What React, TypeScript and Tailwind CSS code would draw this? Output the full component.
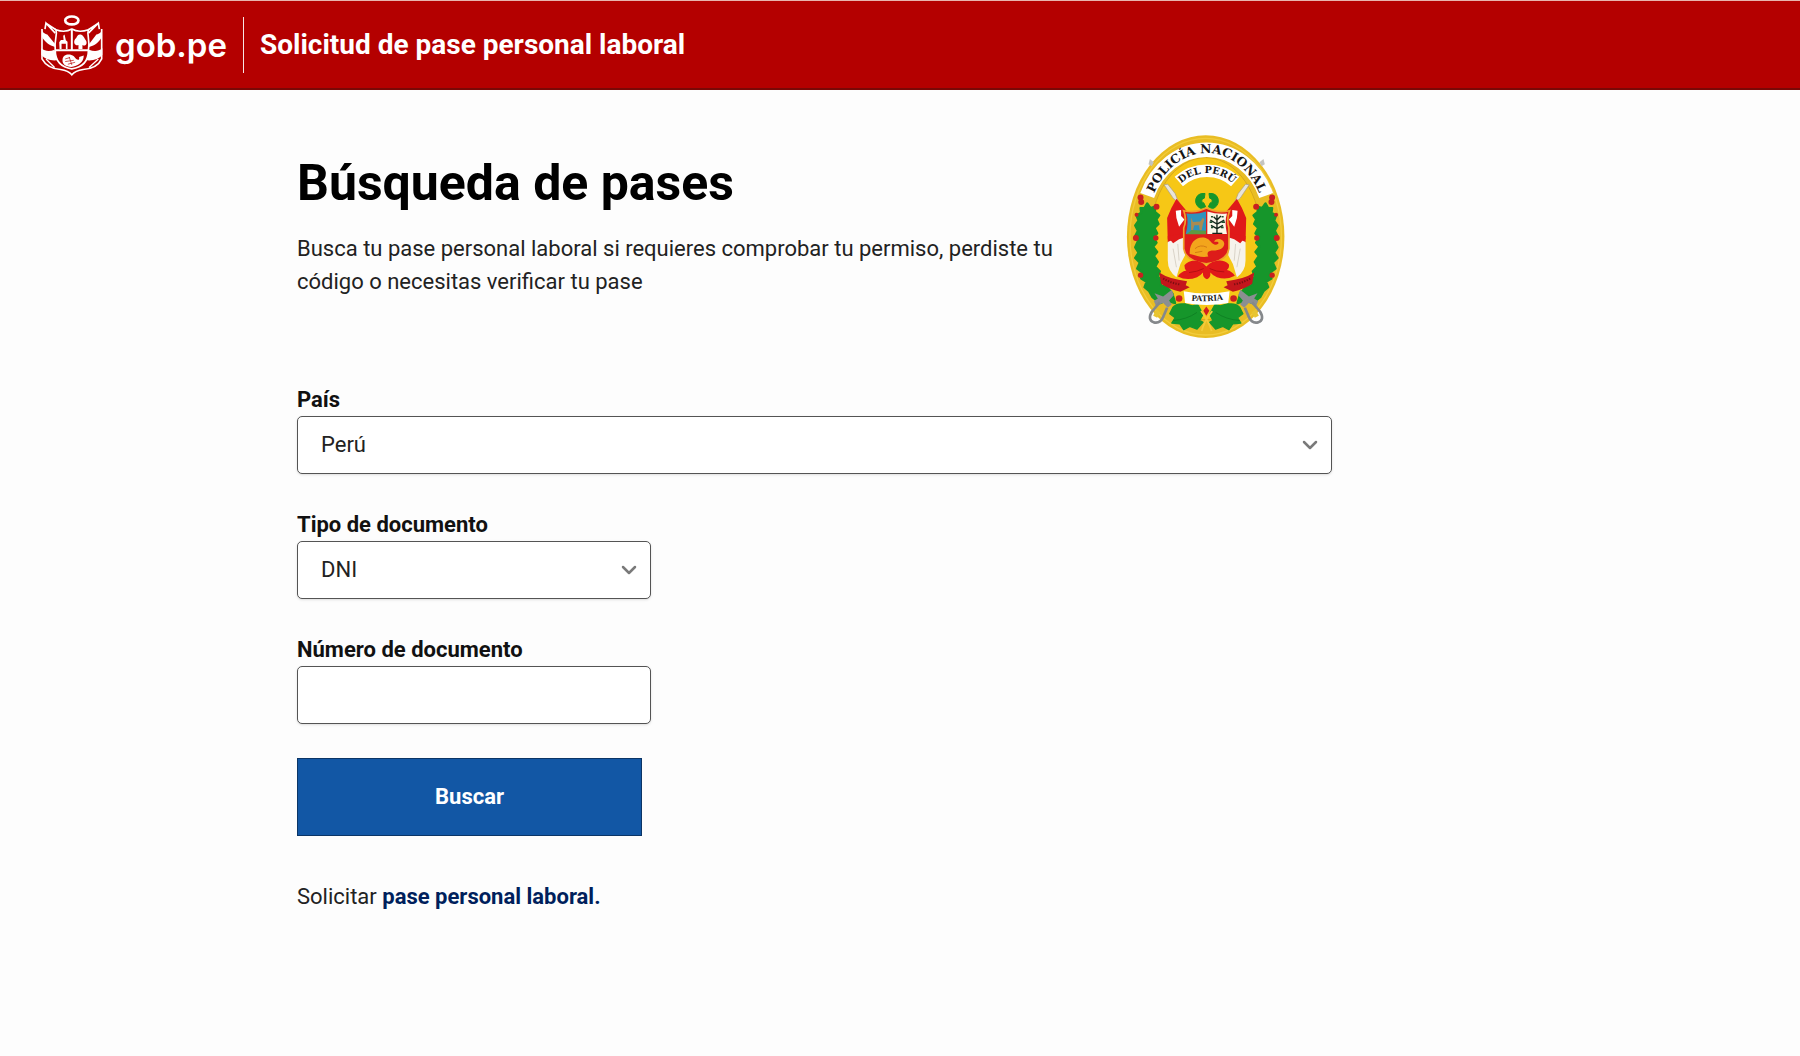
import React from 'react';
import { ChevronDown } from 'lucide-react';

const GobCrest = () => (
  <svg viewBox="60 38 190 192" className="h-[64px] w-[63px]" fill="none" stroke="#fff" aria-hidden="true">
    <ellipse cx="156" cy="60" rx="20" ry="12" strokeWidth="8" />
    {/* Flags */}
    <path d="M106 98 L78 68 L75 86 M206 98 L236 68 L239 86 M78 68 L108 88 M236 68 L206 88" strokeWidth="5" />
    <path d="M66 84 C66 96 74 100 82 102 L108 134 L106 140 C88 136 74 124 66 110 Z" fill="#fff" stroke="none" />
    <path d="M246 84 C246 96 240 100 230 102 L206 134 L208 140 C226 136 240 124 246 110 Z" fill="#fff" stroke="none" />
    <path d="M64 144 C76 154 90 154 104 148 L112 180 C90 182 74 176 64 164 Z" fill="#fff" stroke="none" />
    <path d="M248 144 C236 154 222 154 208 148 L200 180 C222 182 238 176 248 164 Z" fill="#fff" stroke="none" />
    <path d="M66 86 V176 C78 198 96 206 122 208 C138 210 148 214 156 224 C164 214 174 210 190 208 C216 206 236 198 246 176 V86" strokeWidth="5" />
    <path d="M78 176 L104 202 M236 176 L208 202" strokeWidth="4" />
    {/* Shield */}
    <path d="M108 88 C124 94 142 94 156 86 C170 94 188 94 206 88 C200 104 212 116 206 150 C206 186 184 202 156 206 C128 202 106 186 106 150 C102 116 114 104 108 88 Z" fill="#b40000" strokeWidth="5" />
    <path d="M106 150 H206 M156 88 V150" strokeWidth="6" />
    <path d="M134 102 L138 120 L143 124 V146 H138 V130 H125 V146 H119 L118 126 L123 119 H131 L130 106 Z" fill="#fff" stroke="none" />
    <path d="M180 102 C170 104 172 112 166 116 C158 128 168 138 176 134 V146 H188 V134 C198 140 205 128 197 118 C192 110 190 102 180 102 Z" fill="#fff" stroke="none" />
    <path d="M128 178 C128 162 150 158 162 168 C172 182 180 182 178 170 L192 166 C192 188 174 198 154 200 C138 200 126 192 128 178 Z" fill="#fff" stroke="none" />
    <path d="M136 176 L150 172 M136 184 L162 180 M144 192 L166 186 M148 170 L156 194" stroke="#b40000" strokeWidth="2" />
  </svg>
);

const Laurel = () => (
  <g>
    <path
      d="M112 248 L122 262 L134 258 L136 274 L148 284 L140 296 L146 310 L134 322 L142 338 L130 350 L140 366 L130 378 L142 394 L132 406 L144 424 L136 438 L150 452 L144 468 L158 480 L152 494 L172 500 L188 520 L196 548 L170 540 L150 548 L128 530 L118 512 L104 500 L110 484 L94 474 L98 456 L82 444 L90 426 L76 412 L86 396 L76 380 L84 362 L76 346 L84 330 L76 314 L86 300 L80 284 L94 276 L92 262 L104 262 Z"
      fill="#16962b"
      stroke="#16962b"
      strokeWidth="7"
      strokeLinejoin="round"
    />
    <path
      d="M190 560 C204 546 214 552 226 550 L248 556 L264 552 L280 582 L270 600 L280 606 L262 626 L240 618 L222 628 L210 610 L186 608 L196 592 L180 580 Z"
      fill="#16962b"
      stroke="#16962b"
      strokeWidth="4"
      strokeLinejoin="round"
    />
    <path d="M190 600 Q230 598 262 576" fill="none" stroke="#0f8223" strokeWidth="3" />
    <g fill="#c9201f">
      <circle cx="92" cy="230" r="9" />
      <circle cx="94" cy="244" r="9" />
      <circle cx="140" cy="258" r="9" />
      <circle cx="80" cy="282" r="6" />
      <circle cx="78" cy="352" r="9" />
      <circle cx="138" cy="352" r="8" />
      <circle cx="92" cy="464" r="8" />
      <circle cx="208" cy="534" r="10" />
    </g>
  </g>
);

const FlagSide = () => (
  <g>
    <path d="M163 192 L174 190 L196 218 L208 248 L190 232 Z" fill="#e9e4da" stroke="#a39a86" strokeWidth="2" />
    <path d="M120 114 L132 124 L126 136 L116 130 Z" fill="#c4c4c0" />
    <path d="M200 234 L232 272 L226 316 L232 352 L174 366 L172 292 Q184 260 200 234 Z" fill="#e01919" />
    <path d="M198 270 L214 268 L214 286 L224 296 L208 318 L200 292 Z" fill="#fff" />
    <path d="M174 364 L222 342 L226 404 L212 430 L200 470 Q174 452 174 420 Z" fill="#f6f3ec" />
    <path d="M190 384 L200 440 M204 370 L208 420" stroke="#d9d3c8" strokeWidth="3" />
    <path d="M174 346 L222 338 L226 350 L208 356 L190 368 Q184 358 174 356 Z" fill="#e01919" />
    <path d="M148 456 Q178 476 232 482 L228 494 L240 500 L212 514 Q176 506 154 490 Z" fill="#c4161c" />
    <path d="M160 474 Q184 488 212 492" fill="none" stroke="#7d0f12" strokeWidth="6" strokeDasharray="4 4" />
  </g>
);

const Sword = () => (
  <g>
    <path d="M134 518 L160 528 L186 508 L192 524 L178 540 L186 552 L174 562 L160 548 L138 556 L132 542 L144 534 Z" fill="#8b8f92" />
    <path d="M150 546 L126 574 Q112 598 132 606 Q152 610 160 590 L172 562" fill="none" stroke="#85888b" strokeWidth="8" />
    <path d="M140 566 L152 576 L142 592 L130 586 Z" fill="#e8c531" />
  </g>
);

const PoliceCrest = () => (
  <svg viewBox="49 42 480 614" className="h-[204px] w-[160px]" role="img" aria-label="Policía Nacional del Perú">
    <defs>
      <path id="arc-outer" d="M126 236 A179 228 0 0 1 456 236" />
      <path id="arc-inner" d="M201 203 A113 113 0 0 1 383 203" />
      <path id="arc-motto" d="M236 540 Q292 546 350 536" />
    </defs>
    <ellipse cx="288" cy="348" rx="237" ry="305" fill="#e9bd24" />
    <ellipse cx="288" cy="348" rx="228" ry="296" fill="none" stroke="#f2cc3c" strokeWidth="4" />
    <ellipse cx="288" cy="354" rx="168" ry="244" fill="#f6c716" />
    <ellipse cx="288" cy="354" rx="168" ry="244" fill="none" stroke="#d7a91b" strokeWidth="3" />
    <path d="M112 224 A193 220 0 0 1 470 224" fill="none" stroke="#fff" strokeWidth="44" />
    <path d="M207 182 A128 128 0 0 1 377 182" fill="none" stroke="#fff" strokeWidth="38" />
    <g fill="#151515" fontFamily="DejaVu Serif" fontWeight="700" textAnchor="middle">
      <text fontSize="37">
        <textPath href="#arc-outer" startOffset="50%">POLICÍA NACIONAL</textPath>
      </text>
      <text fontSize="29">
        <textPath href="#arc-inner" startOffset="50%">DEL PERÚ</textPath>
      </text>
    </g>

    <Laurel />
    <g transform="matrix(-1 0 0 1 580 0)">
      <Laurel />
    </g>
    <FlagSide />
    <g transform="matrix(-1 0 0 1 582 0)">
      <FlagSide />
    </g>

    {/* Civic crown */}
    <path d="M286 218 C256 214 250 248 268 260 C276 266 284 260 288 258 L282 246 C274 246 274 234 284 232 Z" fill="#16962b" stroke="#16962b" strokeWidth="3" />
    <path d="M298 218 C328 214 334 248 316 260 C308 266 300 260 296 258 L302 246 C310 246 310 234 300 232 Z" fill="#16962b" stroke="#16962b" strokeWidth="3" />

    {/* Shield */}
    <path d="M222 270 Q258 278 290 262 Q322 278 360 270 Q350 296 358 322 V384 Q352 422 290 430 Q228 422 222 384 V322 Q232 296 222 270 Z" fill="#dd1c1a" stroke="#efa32b" strokeWidth="5" />
    <path d="M230 278 Q262 282 289 272 V340 H228 Q238 304 230 278 Z" fill="#2f93bd" />
    <path d="M293 272 Q324 282 352 278 Q344 304 352 340 H293 Z" fill="#fbf7e8" />
    <path d="M230 341 L246 328 L289 330 V341 Z" fill="#5e9a43" />
    <path d="M244 290 L250 304 L272 302 L280 290 L284 296 L280 308 L276 328 H270 L268 314 L254 314 L250 328 H244 Z" fill="#a98b52" />
    <path
      d="M322 338 V282 M322 310 L302 298 M322 310 L344 298 M322 324 L304 314 M322 324 L340 314 M308 338 H338 M312 288 L322 298 L334 286"
      fill="none"
      stroke="#12241a"
      strokeWidth="4"
    />
    <path
      d="M304 288 H310 M336 288 H342 M300 304 H308 M336 304 H346 M304 320 H310 M334 320 H342"
      stroke="#1e4d2e"
      strokeWidth="5"
    />
    <path d="M240 394 C242 362 262 346 288 352 C302 356 306 372 318 372 C332 370 328 360 314 364 C314 350 344 352 344 370 C342 388 320 390 306 390 C296 392 290 396 296 408 C272 412 262 404 240 400 Z" fill="#f3a51c" />
    <path d="M256 384 Q272 370 292 380 M256 396 L278 392" fill="none" stroke="#d47a13" strokeWidth="3" />

    {/* Bow */}
    <path
      d="M290 438 C272 414 236 416 224 434 Q224 446 230 450 Q212 454 204 468 Q232 482 262 470 Q276 462 280 456 Q278 472 292 476 Q304 472 302 456 Q308 464 322 470 Q350 480 376 466 Q368 452 352 448 Q360 442 358 432 C344 414 308 416 290 438 Z"
      fill="#e01919"
    />
    <path d="M238 456 Q262 454 282 444 M344 454 Q320 454 300 444" fill="none" stroke="#b30f12" strokeWidth="3" />

    <path d="M222 512 Q290 526 360 512 L356 548 Q290 560 226 548 Z" fill="#fff" />
    <text fontSize="26" fontFamily="Liberation Serif" fontWeight="700" fill="#151515" textAnchor="middle">
      <textPath href="#arc-motto" startOffset="50%">PATRIA</textPath>
    </text>
    <path d="M276 632 Q286 596 308 572 M306 632 Q296 600 274 572" fill="none" stroke="#f2cc3c" strokeWidth="5" />
    <path d="M290 558 L299 571 L290 586 L281 571 Z" fill="#d21f1f" />
    <Sword />
    <g transform="matrix(-1 0 0 1 578 0)">
      <Sword />
    </g>
  </svg>
);

const fieldClass =
  'block h-[58px] w-full appearance-none rounded-[5px] border border-[#545454] bg-white px-[23px] text-[22px] leading-8 text-[#222] shadow-sm';

type SelectFieldProps = {
  id: string;
  label: string;
  options: string[];
  className?: string;
};

const SelectField = ({ id, label, options, className }: SelectFieldProps) => (
  <div className={className}>
    <label htmlFor={id} className="block text-[22px] leading-[33px] font-bold">
      {label}
    </label>
    <div className="relative">
      <select id={id} className={fieldClass}>
        {options.map((option) => (
          <option key={option}>{option}</option>
        ))}
      </select>
      <ChevronDown className="pointer-events-none absolute inset-y-0 right-[10px] my-auto h-6 w-6 text-[#7a7a7a]" strokeWidth={2.5} />
    </div>
  </div>
);

const Header = () => (
  <header className="flex h-[90px] items-center border-t border-b-2 border-t-[#e8b4ae] border-b-[#7a0806] bg-[#b40000] px-10 text-white">
    <a href="#" className="flex items-center gap-3">
      <GobCrest />
      <span className="font-['Inter'] text-[33px] leading-10 font-semibold">gob.pe</span>
    </a>
    <div className="mx-4 h-14 w-px bg-white/90" />
    <span className="text-[28px] leading-8 font-bold">Solicitud de pase personal laboral</span>
  </header>
);

const App = () => {
  return (
    <div className="min-h-screen bg-[#fdfdfd] font-['Roboto',sans-serif] text-[#111]">
      <Header />
      <main className="px-6 lg:pl-[297px]">
        <div className="max-w-[1035px]">
          <section className="flex items-start pt-[45px]">
            <div className="flex-1 pt-4">
              <h1 className="text-[50px] leading-[64px] font-bold text-black">Búsqueda de pases</h1>
              <p className="mt-[17px] text-[22px] leading-[33px] text-[#222]">
                Busca tu pase personal laboral si requieres comprobar tu permiso, perdiste tu código o necesitas
                verificar tu pase
              </p>
            </div>
            <div className="flex w-[252px] justify-center">
              <PoliceCrest />
            </div>
          </section>

          <form className="mt-11 flex flex-col gap-[34px]" onSubmit={(e) => e.preventDefault()}>
            <SelectField id="pais" label="País" options={['Perú']} />
            <SelectField id="tipo" label="Tipo de documento" options={['DNI']} className="max-w-[354px]" />
            <div className="max-w-[354px]">
              <label htmlFor="numero" className="block text-[22px] leading-[33px] font-bold">
                Número de documento
              </label>
              <input id="numero" type="text" className={fieldClass} />
            </div>
            <button
              type="submit"
              className="h-[78px] w-[345px] border border-[#0b3566] bg-[#1257a5] text-[22px] leading-8 font-bold text-white"
            >
              Buscar
            </button>
          </form>

          <p className="mt-11 text-[22px] leading-[33px] text-[#222]">
            Solicitar{' '}
            <a href="#" className="font-bold text-[#001f5c]">
              pase personal laboral.
            </a>
          </p>
        </div>
      </main>
    </div>
  );
};

export default App;
